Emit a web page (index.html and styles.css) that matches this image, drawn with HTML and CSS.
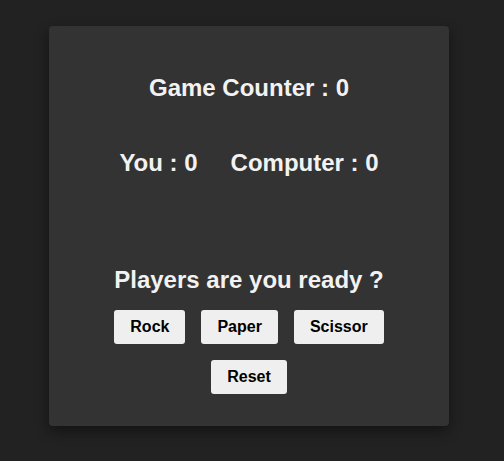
FILE: index.html
```html
<!DOCTYPE html>
<html lang="en">
<head>
<meta charset="utf-8">
<title>Rock Paper Scissor</title>
<link rel="stylesheet" href="styles.css">
</head>
<body>
<main class="card">
  <h2 class="title">Game Counter : 0</h2>
  <div class="scores">
    <h2 class="score">You : 0</h2>
    <h2 class="score">Computer : 0</h2>
  </div>
  <h2 class="ready">Players are you ready ?</h2>
  <div class="choices">
    <button class="btn">Rock</button>
    <button class="btn">Paper</button>
    <button class="btn">Scissor</button>
  </div>
  <div class="controls">
    <button class="btn">Reset</button>
  </div>
</main>
</body>
</html>
```
FILE: styles.css
```css
html, body {
  margin: 0;
  padding: 0;
}
body {
  background: #222222;
  font-family: "Liberation Sans", Arial, sans-serif;
  padding: 26px 0 0 49px;
  min-height: 461px;
  box-sizing: border-box;
}
.card {
  width: 400px;
  height: 400px;
  box-sizing: border-box;
  background: #333333;
  border-radius: 4px;
  box-shadow: 0 5px 14px rgba(0, 0, 0, 0.45);
  padding: 48px 0 32px;
  display: flex;
  flex-direction: column;
  align-items: center;
  color: #f2f2f2;
}
.title, .score, .ready {
  margin: 0;
  font-size: 24px;
  line-height: 28px;
  font-weight: bold;
}
.title {
  margin-bottom: 47px;
}
.scores {
  display: flex;
  gap: 33px;
  margin-bottom: 89px;
}
.ready {
  margin-bottom: 16px;
}
.choices, .controls {
  display: flex;
  gap: 16px;
}
.choices {
  margin-bottom: 16px;
}
.btn {
  font-family: "Liberation Sans", Arial, sans-serif;
  font-size: 16px;
  font-weight: bold;
  line-height: 18px;
  padding: 8px 16px;
  border: none;
  border-radius: 3px;
  background: #efefef;
  color: #000;
}
```
